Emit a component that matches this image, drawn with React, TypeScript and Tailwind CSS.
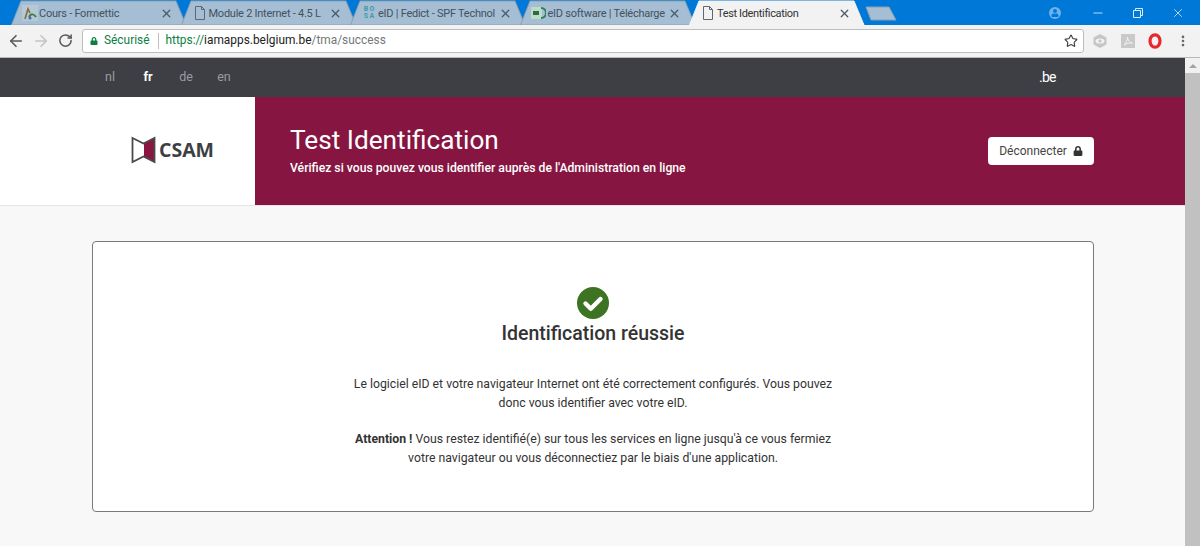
import { ArrowLeft, ArrowRight, RotateCw, Star, X, Minus, EllipsisVertical } from "lucide-react";
import { FaLock, FaUser } from "react-icons/fa";

function Tab({ title, active, icon }: { title: string; active?: boolean; icon: React.ReactNode }) {
  return (
    <div className={active ? "relative z-10 -ml-[8px] h-[25px] w-[177.5px] shrink-0" : "relative -ml-[8px] h-[25px] w-[177.5px] shrink-0"}>
      <svg className="absolute inset-0" width="177" height="25" viewBox="0 0 177 25">
        <path d="M0.5 25 L10 1 H165 L175 25 Z" fill={active ? "#f2f2f2" : "#a5bed4"} stroke={active ? "#f2f2f2" : "#8a9fb2"} strokeWidth="1" />
      </svg>
      <div className="relative flex h-full items-center pl-[10px] pr-[16px] pt-[1px]">
        <span className="flex h-[16px] w-[18px] shrink-0 items-center justify-center">{icon}</span>
        <span className={active ? "whitespace-nowrap text-[11px] leading-none tracking-[-0.35px] text-[#333]" : "whitespace-nowrap text-[11px] leading-none tracking-[-0.25px] text-[#44515c]"}>{title}</span>
        <X className="ml-auto shrink-0 text-[#4b5a66]" size={13} strokeWidth={2.4} />
      </div>
    </div>
  );
}

function PageIcon() {
  return (
    <svg width="12" height="14" viewBox="0 0 12 14" fill="none" stroke="#5f6770" strokeWidth="1">
      <path d="M1.5 0.5 H7.5 L10.5 3.5 V13.5 H1.5 Z M7.5 0.5 V3.5 H10.5" />
    </svg>
  );
}

export default function App() {
  return (
    <div className="flex h-[546px] w-[1200px] flex-col overflow-hidden bg-[#f8f8f8] font-['Roboto',sans-serif] text-[#333]">
      {/* window title bar */}
      <div className="flex h-[25px] shrink-0 items-center bg-[#0078d7]">
        <div className="flex pl-[19px]">
          <Tab
            title="Cours - Formettic"
            icon={
              <svg width="16" height="16" viewBox="0 0 16 16">
                <rect width="16" height="16" fill="#b5c8d6" />
                <path d="M3 14 L6 4 L8 8" fill="none" stroke="#8a6a3a" strokeWidth="1.6" />
                <path d="M7 12 C9 8 12 9 14 12" fill="none" stroke="#3f7a4a" strokeWidth="2" />
                <circle cx="8" cy="13" r="1.5" fill="#3b6fa8" />
              </svg>
            }
          />
          <Tab title="Module 2 Internet - 4.5 L" icon={<PageIcon />} />
          <Tab
            title="eID | Fedict - SPF Technol"
            icon={
              <span className="grid grid-cols-2 gap-x-[1px] text-[7px] leading-[7px] font-bold text-[#3d9aa6]">
                <span>B</span>
                <span>O</span>
                <span>S</span>
                <span>A</span>
              </span>
            }
          />
          <Tab
            title="eID software | Télécharge"
            icon={
              <svg width="15" height="12" viewBox="0 0 15 12">
                <rect width="11" height="12" fill="#bcdcca" />
                <rect x="2" y="4" width="6" height="4" fill="#2e6b3f" />
                <path d="M10 1 A5 5 0 0 1 10 11" fill="none" stroke="#2e7d5b" strokeWidth="2" />
              </svg>
            }
          />
          <Tab title="Test Identification" active icon={<PageIcon />} />
          <svg className="mt-[6px] -ml-[2px]" width="32" height="15" viewBox="0 0 32 15">
            <path d="M1 1 H24 L31 14 H6 Z" fill="#a5bed4" stroke="#8a9fb2" strokeWidth="1" />
          </svg>
        </div>
        <div className="ml-auto flex h-full items-center">
          <span className="mr-[30px] flex h-[12px] w-[12px] items-center justify-center overflow-hidden rounded-full bg-[#6fb3ea]">
            <FaUser size={8} className="text-[#0078d7]" />
          </span>
          <Minus size={14} className="mr-[28px] text-[#b9d9f3]" />
          <svg className="mr-[28px]" width="10" height="10" viewBox="0 0 10 10" fill="none" stroke="#dcecf9" strokeWidth="1">
            <path d="M0.5 2.5 H7.5 V9.5 H0.5 Z M2.5 2.5 V0.5 H9.5 V7.5 H7.5" />
          </svg>
          <X size={14} className="mr-[15px] text-[#dcecf9]" strokeWidth={1.4} />
        </div>
      </div>

      {/* browser toolbar */}
      <div className="flex h-[33px] shrink-0 items-center border-b border-[#b8b8b8] bg-[#f2f2f2] pb-[1px]">
        <div className="flex w-[82px] items-center pl-[7px]">
          <ArrowLeft size={18} strokeWidth={2.2} className="text-[#5a5a5a]" />
          <ArrowRight size={18} strokeWidth={2.2} className="ml-[7px] text-[#c4c4c4]" />
          <RotateCw size={15} strokeWidth={2.4} className="ml-[8px] text-[#5a5a5a]" />
        </div>
        <div className="flex h-[24px] w-[1002px] items-center rounded-[3px] border border-[#bdbdbd] bg-white pl-[7px] pr-[5px] text-[11.9px] leading-none">
          <FaLock size={8} className="text-[#0b8043]" />
          <span className="ml-[6px] text-[#0b8043]">Sécurisé</span>
          <span className="ml-[8px] mr-[7px] h-[16px] w-px bg-[#c0c0c0]" />
          <span className="text-[#0b8043]">https://</span>
          <span className="text-[#222]">iamapps.belgium.be</span>
          <span className="text-[#777]">/tma/success</span>
          <Star size={14} strokeWidth={2} className="ml-auto text-[#444]" />
        </div>
        <div className="flex flex-1 items-center pl-[8px]">
          <svg width="16" height="16" viewBox="0 0 16 16">
            <path d="M8 1 L14.5 4.5 V11.5 L8 15 L1.5 11.5 V4.5 Z" fill="#c6c6c6" />
            <ellipse cx="8" cy="8" rx="4.5" ry="2.6" fill="#f2f2f2" />
            <circle cx="8" cy="8" r="1.6" fill="#c6c6c6" />
          </svg>
          <span className="ml-[13px] flex h-[14px] w-[14px] items-center justify-center bg-[#c9c9c9]">
            <svg width="10" height="10" viewBox="0 0 10 10" fill="none" stroke="#f2f2f2" strokeWidth="1">
              <path d="M1 9 C3 7 5 3 4.5 1 C4.5 4 7 7 9.5 7 C7 6.5 3 7.5 1 9 Z" />
            </svg>
          </span>
          <svg className="ml-[13px]" width="14" height="16" viewBox="0 0 14 16">
            <ellipse cx="7" cy="8" rx="5" ry="6.2" fill="none" stroke="#e8262d" strokeWidth="3.2" />
          </svg>
          <EllipsisVertical size={14} strokeWidth={2.6} className="ml-[14px] text-[#666]" />
        </div>
      </div>

      {/* page + scrollbar */}
      <div className="flex min-h-0 flex-1">
        <div className="flex min-w-0 flex-1 flex-col">
          <div className="flex h-[39px] shrink-0 items-center bg-[#3e3f44] text-[12.5px]">
            <div className="ml-[91px] grid w-[152px] grid-cols-4 text-center">
              <span className="text-[#9b9ca0]">nl</span>
              <span className="font-bold text-white">fr</span>
              <span className="text-[#9b9ca0]">de</span>
              <span className="text-[#9b9ca0]">en</span>
            </div>
            <span className="ml-[796px] text-[14px] tracking-[-0.8px] text-white">.be</span>
          </div>

          <div className="flex h-[109px] shrink-0 border-b border-[#e4e4e4]">
            <div className="flex w-[255px] shrink-0 items-center bg-white pb-[2px] pl-[131px]">
              <svg width="25" height="28" viewBox="0 0 25 28">
                <path d="M13 7 L23 2.5 V25.5 L13 21 Z" fill="#8a1640" />
                <path d="M1.5 2 L12.5 7.5 L23.5 2 V26 L12.5 20.5 L1.5 26 Z" fill="none" stroke="#4a4a4c" strokeWidth="1.8" strokeLinejoin="miter" />
              </svg>
              <span className="ml-[3px] text-[19.5px] leading-none font-bold text-[#3e3f44] font-['Open_Sans',sans-serif]">CSAM</span>
            </div>
            <div className="flex flex-1 items-center justify-between bg-[#861641] pb-[1px] pl-[35px] pr-[91px] text-white">
              <div>
                <h1 className="text-[26.2px] leading-[30px]">Test Identification</h1>
                <p className="mt-[5px] text-[12.2px] leading-[16px] font-medium">Vérifiez si vous pouvez vous identifier auprès de l'Administration en ligne</p>
              </div>
              <button className="mt-[1px] flex h-[28px] w-[106px] items-center justify-center gap-[6px] rounded-[4px] bg-white text-[12px] text-[#444]">
                Déconnecter
                <FaLock size={10} className="text-[#333]" />
              </button>
            </div>
          </div>

          <div className="pl-[92px] pt-[35px]">
            <div className="flex h-[271px] w-[1002px] flex-col items-center rounded-[4px] border border-[#7a7a7a] bg-white pt-[45px]">
              <svg width="32" height="32" viewBox="0 0 32 32">
                <circle cx="16" cy="16" r="16" fill="#3c7424" />
                <path d="M8.5 16.5 L13.8 21.8 L23.5 12" fill="none" stroke="#fff" strokeWidth="4.4" strokeLinecap="round" strokeLinejoin="round" />
              </svg>
              <h2 className="mt-[2px] text-[19.5px] leading-[26px] font-medium text-[#333]">Identification réussie</h2>
              <p className="mt-[28px] w-[500px] text-center text-[12.25px] leading-[19px] text-[#333]">
                Le logiciel eID et votre navigateur Internet ont été correctement configurés. Vous pouvez
                <br />
                donc vous identifier avec votre eID.
              </p>
              <p className="mt-[17px] w-[500px] text-center text-[12.25px] leading-[19px] text-[#333]">
                <strong className="font-bold">Attention !</strong> Vous restez identifié(e) sur tous les services en ligne jusqu'à ce vous fermiez
                <br />
                votre navigateur ou vous déconnectiez par le biais d'une application.
              </p>
            </div>
          </div>
        </div>

        <div className="flex w-[15px] shrink-0 flex-col items-center bg-[#f1f1f1]">
          <svg className="mt-[6px] mb-[5px]" width="8" height="4" viewBox="0 0 8 4">
            <path d="M4 0 L8 4 H0 Z" fill="#a3a3a3" />
          </svg>
          <div className="w-full flex-1 bg-[#c1c1c1]" />
        </div>
      </div>
    </div>
  );
}
